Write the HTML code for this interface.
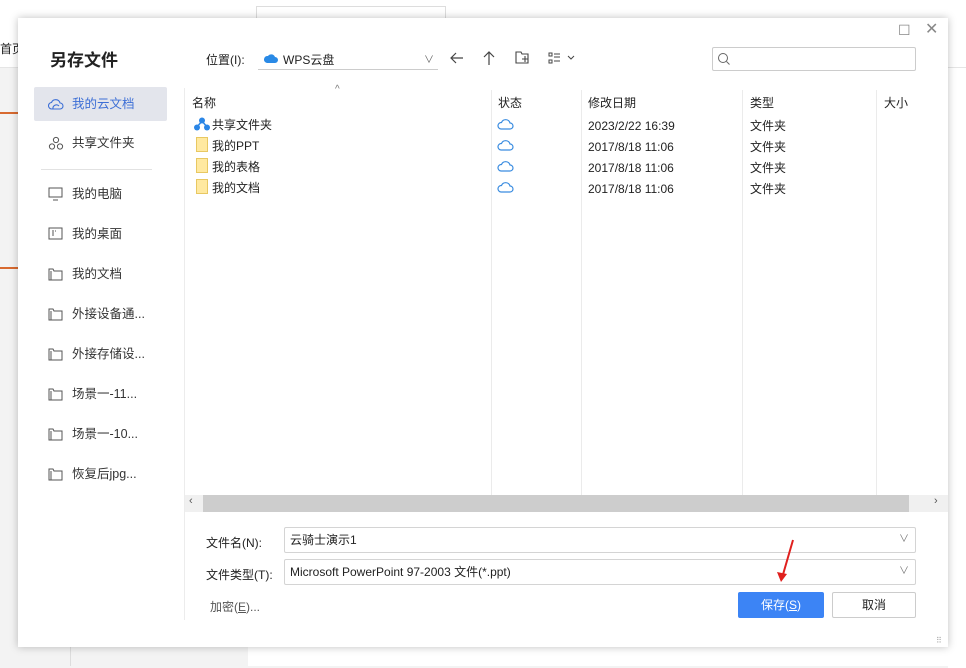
<!DOCTYPE html>
<html><head><meta charset="utf-8"><style>
*{margin:0;padding:0;box-sizing:border-box}
body{width:966px;height:666px;overflow:hidden;background:#f3f3f3;font-family:"Liberation Sans","Noto Sans CJK SC",sans-serif;font-size:12px;color:#222;position:relative}
.abs{position:absolute}
.dlg{left:18px;top:18px;width:930px;height:629px;background:#fff;box-shadow:0 0 8px rgba(0,0,0,.25)}
.side{font-size:12.5px;color:#333}
.si{position:absolute;left:16px;width:133px;height:34px;line-height:34px;padding-left:38px}
.si svg{position:absolute;left:14px;top:10px}
.hdr{position:absolute;top:74px;font-size:12px;color:#222}
.fold{display:inline-block;width:12px;height:15px;background:#ffe9a0;border:1px solid #e8c862;vertical-align:middle;margin-right:4px}
.col{position:absolute;top:88px;height:407px;width:1px;background:#ebebeb}
.inp{position:absolute;left:284px;width:632px;height:26px;border:1px solid #d4d4d4;border-radius:2px;line-height:24px;padding-left:5px;font-size:12px}
.inp i{position:absolute;right:6px;top:0;font-style:normal;color:#777;font-size:10px}
</style></head><body>
<div class="abs" style="left:0;top:0;width:966px;height:68px;background:#fff;border-bottom:1px solid #e5e5e5"></div>
<div class="abs" style="left:256px;top:6px;width:190px;height:20px;border:1px solid #ddd"></div>
<div class="abs" style="left:0;top:40px;font-size:12px">首页</div>
<div class="abs" style="left:0;top:112px;width:18px;height:2px;background:#d86a30"></div>
<div class="abs" style="left:0;top:267px;width:18px;height:2px;background:#d86a30"></div>
<div class="abs" style="left:70px;top:647px;width:1px;height:19px;background:#ddd"></div>
<div class="abs" style="left:248px;top:647px;width:718px;height:19px;background:#fff"></div>
<div class="abs" style="left:948px;top:68px;width:18px;height:600px;background:#fff"></div>

<div class="abs dlg">
  <div class="abs" style="left:880px;top:4px;color:#888;font-size:14px">☐</div>
  <div class="abs" style="left:907px;top:1px;color:#888;font-size:16px">✕</div>
  <div class="abs" style="left:32px;top:28px;font-size:17px;font-weight:bold;color:#222">另存文件</div>
  <div class="abs" style="left:188px;top:33px;font-size:12px">位置(I):</div>
  <div class="abs" style="left:240px;top:28px;width:180px;height:24px;border-bottom:1px solid #ccc"></div>
  <svg class="abs" style="left:246px;top:35px" width="14" height="11"><path d="M3 10h8a3 3 0 0 0 0-6 4 4 0 0 0-7-1 3.5 3.5 0 0 0-1 7z" fill="#2a8ae6"/></svg>
  <div class="abs" style="left:265px;top:33px;font-size:12px">WPS云盘</div>
  <div class="abs" style="left:406px;top:33px;font-size:10px;color:#666">∨</div>
  <svg class="abs" style="left:431px;top:33px" width="16" height="14"><path d="M14 7H2M7 2L2 7l5 5" stroke="#444" fill="none" stroke-width="1.2"/></svg>
  <svg class="abs" style="left:464px;top:32px" width="14" height="16"><path d="M7 15V2M2 7l5-5 5 5" stroke="#444" fill="none" stroke-width="1.2"/></svg>
  <svg class="abs" style="left:497px;top:33px" width="16" height="14"><path d="M1 1h5l1 2h6v9H1z M10 5v6M7 8h6" stroke="#444" fill="none" stroke-width="1.1"/></svg>
  <svg class="abs" style="left:530px;top:34px" width="30" height="12"><path d="M1 1h3v3H1zM1 8h3v3H1zM6 2h6M6 5h6M6 9h6" stroke="#444" fill="none"/><path d="M20 4l3 3 3-3" stroke="#444" fill="none"/></svg>
  <div class="abs" style="left:694px;top:29px;width:204px;height:24px;border:1px solid #ccc;border-radius:2px"></div>
  <svg class="abs" style="left:699px;top:34px" width="14" height="14"><circle cx="6" cy="6" r="4.5" stroke="#666" fill="none"/><path d="M9.5 9.5l3 3" stroke="#666"/></svg>

  <div class="side">
    <div class="si" style="top:69px;background:#e3e5ec;color:#3d6fd6;border-radius:2px;width:133px">
      <svg width="16" height="14"><path d="M4 12h8a3 3 0 0 0 0-6 4.5 4.5 0 0 0-8.5-.5A3.2 3.2 0 0 0 4 12z M5 12a3.5 3.5 0 0 1 6-3" stroke="#3d6fd6" fill="none" stroke-width="1.1"/></svg>我的云文档</div>
    <div class="si" style="top:108px"><svg width="16" height="14"><circle cx="8" cy="4" r="2.6" stroke="#555" fill="none"/><circle cx="4" cy="10.5" r="2.6" stroke="#555" fill="none"/><circle cx="12" cy="10.5" r="2.6" stroke="#555" fill="none"/></svg>共享文件夹</div>
    <div class="abs" style="left:23px;top:151px;width:111px;height:1px;background:#e2e2e2"></div>
    <div class="si" style="top:159px"><svg width="16" height="14"><path d="M1 1h13v9H1zM5 13h5" stroke="#555" fill="none"/></svg>我的电脑</div>
    <div class="si" style="top:199px"><svg width="16" height="14"><path d="M1 1h13v11H1z" stroke="#555" fill="none"/><path d="M4 4h2M4 6h2M4 8h2M7 4h1" stroke="#555"/></svg>我的桌面</div>
    <div class="si" style="top:239px"><svg width="16" height="14"><path d="M1 2h4l1 2h8v9H1zM3 4v9" stroke="#555" fill="none"/></svg>我的文档</div>
    <div class="si" style="top:279px"><svg width="16" height="14"><path d="M1 2h4l1 2h8v9H1zM3 4v9" stroke="#555" fill="none"/></svg>外接设备通...</div>
    <div class="si" style="top:319px"><svg width="16" height="14"><path d="M1 2h4l1 2h8v9H1zM3 4v9" stroke="#555" fill="none"/></svg>外接存储设...</div>
    <div class="si" style="top:359px"><svg width="16" height="14"><path d="M1 2h4l1 2h8v9H1zM3 4v9" stroke="#555" fill="none"/></svg>场景一-11...</div>
    <div class="si" style="top:399px"><svg width="16" height="14"><path d="M1 2h4l1 2h8v9H1zM3 4v9" stroke="#555" fill="none"/></svg>场景一-10...</div>
    <div class="si" style="top:439px"><svg width="16" height="14"><path d="M1 2h4l1 2h8v9H1zM3 4v9" stroke="#555" fill="none"/></svg>恢复后jpg...</div>
  </div>
  <div class="abs" style="left:166px;top:70px;width:1px;height:532px;background:#ececec"></div>

  <div class="abs" style="left:317px;top:66px;font-size:10px;color:#777">^</div>
  <div class="hdr" style="left:174px;top:76px">名称</div>
  <div class="hdr" style="left:480px;top:76px">状态</div>
  <div class="hdr" style="left:570px;top:76px">修改日期</div>
  <div class="hdr" style="left:732px;top:76px">类型</div>
  <div class="hdr" style="left:866px;top:76px">大小</div>
  <div class="col" style="left:473px;top:72px"></div>
  <div class="col" style="left:563px;top:72px"></div>
  <div class="col" style="left:724px;top:72px"></div>
  <div class="col" style="left:858px;top:72px"></div>

  <div class="abs" style="left:174px;top:98px;width:700px">
    <svg class="abs" style="left:2px;top:1px" width="16" height="14"><circle cx="8" cy="3.5" r="3" fill="#2b86e6"/><circle cx="3" cy="10.5" r="3" fill="#2b86e6"/><circle cx="13" cy="10.5" r="3" fill="#2b86e6"/><path d="M8 4L3 10M8 4l5 6" stroke="#2b86e6" stroke-width="1.5"/></svg>
    <div class="abs" style="left:20px;top:0">共享文件夹</div>
    <div class="abs" style="left:4px;top:21px"><span class="fold"></span></div><div class="abs" style="left:20px;top:21px">我的PPT</div>
    <div class="abs" style="left:4px;top:42px"><span class="fold"></span></div><div class="abs" style="left:20px;top:42px">我的表格</div>
    <div class="abs" style="left:4px;top:63px"><span class="fold"></span></div><div class="abs" style="left:20px;top:63px">我的文档</div>
  </div>
  <div class="abs" style="left:479px;top:98px">
    <svg class="abs" style="top:1px" width="18" height="84"><g stroke="#3a8ce0" fill="none" stroke-width="1.2"><path d="M4 12h9a3 3 0 0 0 0-6 4.5 4.5 0 0 0-8.5-.5A3.2 3.2 0 0 0 4 12z"/><path transform="translate(0,21)" d="M4 12h9a3 3 0 0 0 0-6 4.5 4.5 0 0 0-8.5-.5A3.2 3.2 0 0 0 4 12z"/><path transform="translate(0,42)" d="M4 12h9a3 3 0 0 0 0-6 4.5 4.5 0 0 0-8.5-.5A3.2 3.2 0 0 0 4 12z"/><path transform="translate(0,63)" d="M4 12h9a3 3 0 0 0 0-6 4.5 4.5 0 0 0-8.5-.5A3.2 3.2 0 0 0 4 12z"/></g></svg>
  </div>
  <div class="abs" style="left:570px;top:98px;line-height:21px">2023/2/22 16:39<br>2017/8/18 11:06<br>2017/8/18 11:06<br>2017/8/18 11:06</div>
  <div class="abs" style="left:732px;top:98px;line-height:21px">文件夹<br>文件夹<br>文件夹<br>文件夹</div>

  <div class="abs" style="left:167px;top:477px;width:763px;height:17px;background:#f0f0f0"></div>
  <div class="abs" style="left:185px;top:477px;width:706px;height:17px;background:#cdcdcd"></div>
  <div class="abs" style="left:171px;top:477px;font-size:11px;color:#555">‹</div>
  <div class="abs" style="left:916px;top:477px;font-size:11px;color:#555">›</div>

  <div class="abs" style="left:188px;top:516px;font-size:12px">文件名(N):</div>
  <div class="inp" style="left:266px;top:509px">云骑士演示1<i>∨</i></div>
  <div class="abs" style="left:188px;top:548px;font-size:12px">文件类型(T):</div>
  <div class="inp" style="left:266px;top:541px">Microsoft PowerPoint 97-2003 文件(*.ppt)<i>∨</i></div>
  <div class="abs" style="left:192px;top:580px;font-size:12px;color:#555">加密(<u>E</u>)...</div>
  <div class="abs" style="left:720px;top:574px;width:86px;height:26px;background:#3c84f5;color:#fff;text-align:center;line-height:26px;border-radius:2px">保存(<u>S</u>)</div>
  <div class="abs" style="left:814px;top:574px;width:84px;height:26px;border:1px solid #ccc;text-align:center;line-height:24px;border-radius:2px">取消</div>
  <svg class="abs" style="left:755px;top:520px" width="25" height="46"><path d="M20 2L9 40" stroke="#e0201e" stroke-width="2"/><path d="M4 34l4 10 6-8z" fill="#e0201e"/></svg>
  <div class="abs" style="left:918px;top:618px;font-size:8px;color:#aaa">⠿</div>
</div>
</body></html>
